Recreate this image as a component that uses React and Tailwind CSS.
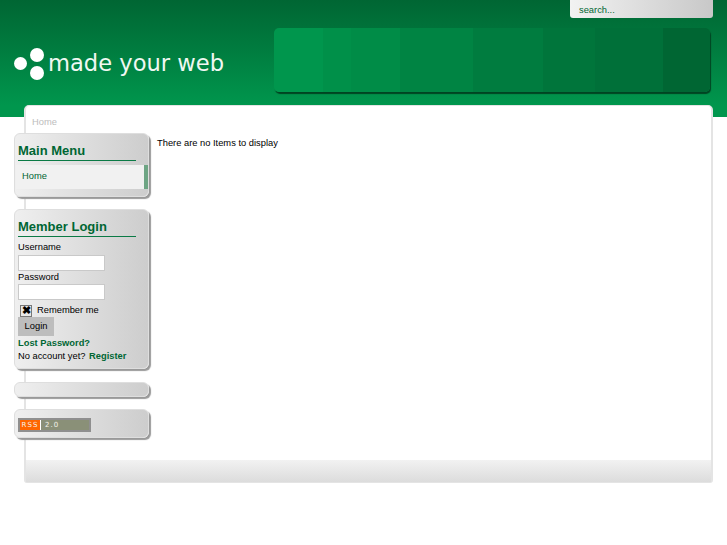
import React from 'react';

const boxClass = "rounded-[6px] border border-[#dedede] bg-gradient-to-r from-[#efefef] to-[#cdcdcd] shadow-[2px_2px_1px_#999999]";

const bannerSteps = [
  'w-[49px] bg-[#00964d]',
  'w-[28px] bg-[#009049]',
  'w-[49px] bg-[#008c47]',
  'w-[73px] bg-[#008443]',
  'w-[70px] bg-[#007c3f]',
  'w-[52px] bg-[#00753b]',
  'w-[68px] bg-[#007039]',
  'w-[47px] bg-[#006633]',
];

const Box = ({ className = '', children }) => (
  <div className={`${boxClass} ${className}`}>{children}</div>
);

const BoxTitle = ({ children }) => (
  <h3 className="mr-[12px] border-b border-[#0a7a45] text-[13px] leading-[16px] h-[18px] font-bold text-[#006633]">
    {children}
  </h3>
);

const App = () => {
  return (
    <div className="min-h-[545px] bg-white font-['Liberation_Sans',sans-serif] text-[9.33px] text-black">
      {/* Header */}
      <header className="h-[117px] bg-gradient-to-b from-[#006633] to-[#00964d] to-90% flex flex-col">
        <div className="flex justify-end pr-[14px]">
          <div className="w-[143px] h-[18px] rounded-b-[3px] bg-gradient-to-r from-[#f2f2f2] to-[#c8c8c8] pl-[9px] leading-[20px] text-[#006633]">
            search...
          </div>
        </div>
        <div className="flex items-start justify-between mt-[10px] pl-[14px] pr-[17px]">
          <div className="flex items-start mt-[20px]">
            <svg width="32" height="32" viewBox="0 0 32 32" className="shrink-0">
              <circle cx="6.5" cy="15.5" r="6.5" fill="#fff" />
              <circle cx="23" cy="7" r="7" fill="#fff" />
              <circle cx="23" cy="25" r="7" fill="#fff" />
            </svg>
            <span className="ml-[2px] text-[22.6px] leading-[30px] text-[#f0f8f2] font-['DejaVu_Sans',sans-serif] whitespace-nowrap">made your web</span>
          </div>
          <div className="flex h-[64px] rounded-[5px] overflow-hidden shadow-[1px_2px_1px_#004422]">
            {bannerSteps.map((step) => (
              <div key={step} className={step} />
            ))}
          </div>
        </div>
      </header>

      {/* Content panel */}
      <div className="relative -mt-[12px] ml-[24px] mr-[14px] h-[378px] rounded-t-[5px] rounded-b-[3px] bg-white border-x-2 border-t border-b border-[#e4e4e4] flex flex-col">
        <div className="pl-[6px] pt-[10px] h-[27px] text-[#bdbdbd] leading-[12px]">Home</div>
        <div className="flex flex-1 -ml-[12px]">
          {/* Sidebar */}
          <div className="w-[135px] shrink-0 flex flex-col">
            <Box className="h-[64px] pt-[9px]">
              <div className="pl-[3px]"><BoxTitle>Main Menu</BoxTitle></div>
              <div className="mt-[4px] ml-[1px] h-[24px] bg-[#f1f1f1] border-r-[4px] border-[#6ea584] pl-[6px] leading-[23px] text-[#006633]">
                Home
              </div>
            </Box>

            <Box className="h-[160px] mt-[12px] pt-[9px] pl-[3px]">
              <BoxTitle>Member Login</BoxTitle>
              <div className="mt-[3px] leading-[15px]">Username</div>
              <div className="w-[87px] h-[16px] bg-white border border-[#c9c9c9]" />
              <div className="leading-[13px]">Password</div>
              <div className="w-[87px] h-[16px] bg-white border border-[#c9c9c9]" />
              <div className="flex items-center mt-[4px] h-[13px]">
                <span className="ml-[2px] w-[12px] h-[12px] flex items-center justify-center bg-[#e8e8e8] border border-[#777] text-[11px] leading-none font-bold">✖</span>
                <span className="ml-[5px]">Remember me</span>
              </div>
              <div className="w-[36px] h-[19px] bg-[#bdbdbd] text-center leading-[18px]">Login</div>
              <div className="mt-[1px] leading-[13px] font-bold text-[#006633]">Lost Password?</div>
              <div className="leading-[13px] whitespace-nowrap">
                No account yet? <span className="ml-[1px] font-bold text-[#006633]">Register</span>
              </div>
            </Box>

            <Box className="h-[15px] mt-[13px]" />

            <Box className="h-[29px] mt-[12px] pt-[8px] pl-[3px]">
              <div className="flex w-[73px] h-[14px] border-2 border-[#8f8f8f] bg-[#8a9078] text-[7px] leading-[10px] tracking-[1px] text-[#f4f4ea] font-['DejaVu_Sans',sans-serif]">
                <span className="w-[21px] bg-[#ff6600] border-r border-white text-center">RSS</span>
                <span className="pl-[4px]">2.0</span>
              </div>
            </Box>
          </div>

          {/* Main */}
          <main className="pl-[8px] pt-[3px] leading-[14px]">
            There are no Items to display
          </main>
        </div>
        <div className="h-[22px] bg-gradient-to-b from-[#f2f2f2] to-[#dcdcdc]" />
      </div>
    </div>
  );
};

export default App;
